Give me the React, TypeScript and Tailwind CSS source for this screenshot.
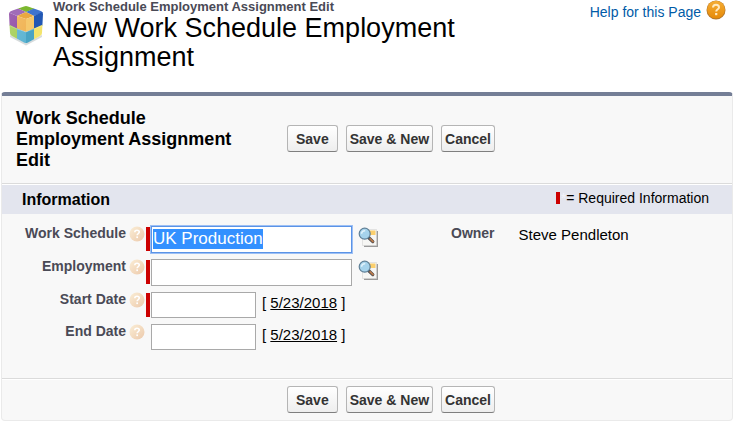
import { useEffect, useRef } from "react";
import type { ReactNode, RefObject } from "react";

function CubeIcon() {
  return (
    <svg viewBox="0 0 36 42" className="h-[42px] w-9 shrink-0" aria-hidden="true">
      <defs>
        <linearGradient id="cube-shade" x1="0" y1="0" x2="1" y2="1">
          <stop offset="0" stopColor="#fff" stopOpacity="0.15" />
          <stop offset="1" stopColor="#fff" stopOpacity="0" />
        </linearGradient>
        <clipPath id="cube-outline">
          <path d="M16 2.4Q18 1.6 20 2.4L33 7Q35 8 35 10L34 29Q34 31 32 32L20 38.5Q18 39.6 16 38.5L4 32Q2 31 2 29L1 10Q1 8 3 7Z" />
        </clipPath>
      </defs>
      <path d="M2 31 18 39 34 31 34 33 18 41.5 2 33Z" fill="#8d979c" opacity="0.35" />
      <g clipPath="url(#cube-outline)">
        <path d="M9 4 18 1 27 4.5 18 8Z" fill="#7cb82f" />
        <path d="M0 8 9 4 18 8 9 12Z" fill="#a06cb8" />
        <path d="M27 4 36 8 26 12 18 8Z" fill="#3f74cf" />
        <path d="M9 12 18 8 26 12 18 15Z" fill="#e9a840" />
        <path d="M0 8 9 12V25L0 21Z" fill="#8f4aa5" />
        <path d="M9 12 18 15V28L9 25Z" fill="#f0b352" />
        <path d="M18 15 26 12V25L18 28Z" fill="#f5c86c" />
        <path d="M26 12 36 7V21L26 25Z" fill="#2258b4" />
        <path d="M0 20 9 24.5V37L0 32Z" fill="#a5cf58" />
        <path d="M9 24.5 18 28V41L9 37Z" fill="#5db4d2" />
        <path d="M18 28 26 24.5V37L18 41Z" fill="#49a4c4" />
        <path d="M26 24.5 36 20V32L26 37Z" fill="#f3e46c" />
        <path d="M0 8 18 15V41L0 33Z" fill="url(#cube-shade)" />
        <path d="M0 21 9 25 18 28 26 25 36 21" fill="none" stroke="#fff" strokeOpacity="0.2" />
      </g>
    </svg>
  );
}

function HelpIcon() {
  return (
    <svg viewBox="0 0 20 20" className="size-5 shrink-0" aria-hidden="true">
      <defs>
        <linearGradient id="help-fill" x1="0" y1="0" x2="0" y2="1">
          <stop offset="0" stopColor="#f5ad35" />
          <stop offset="1" stopColor="#e68a08" />
        </linearGradient>
      </defs>
      <circle cx="10" cy="10" r="9.5" fill="#b0752c" />
      <circle cx="10" cy="9.6" r="8.9" fill="url(#help-fill)" />
      <path
        d="M7 7.6C7 5.6 8.3 4.8 10 4.8S13 5.8 13 7.4C13 9.3 10.2 9.3 10.2 11.6"
        fill="none"
        stroke="#ffe9c0"
        strokeWidth="2"
      />
      <rect x="9.1" y="13" width="2.2" height="2.2" fill="#ffe9c0" />
    </svg>
  );
}

function HintIcon() {
  return (
    <svg viewBox="0 0 16 16" className="size-4 shrink-0" aria-hidden="true">
      <defs>
        <linearGradient id="hint-fill" x1="0" y1="0" x2="1" y2="1">
          <stop offset="0" stopColor="#fbeed6" />
          <stop offset="1" stopColor="#ecc9ab" />
        </linearGradient>
      </defs>
      <circle cx="8" cy="8" r="7.5" fill="url(#hint-fill)" />
      <path
        d="M5.8 6.2C5.8 4.8 6.7 4.2 8 4.2S10.3 4.9 10.3 6.1C10.3 7.6 8.1 7.6 8.1 9.3"
        fill="none"
        stroke="#fff"
        strokeWidth="1.6"
      />
      <rect x="7.3" y="10.4" width="1.7" height="1.7" fill="#fff" />
    </svg>
  );
}

function LookupIcon() {
  return (
    <svg viewBox="0 0 21 21" className="size-[21px]" aria-hidden="true">
      <path d="M6 4H20V20H6Z" fill="#9a9a9a" />
      <path d="M4.5 2.5H18.5V18.5H4.5Z" fill="#f6f6f4" stroke="#d4d4d4" strokeWidth="0.6" />
      <path d="M9 3.5H17.5V8H9Z" fill="#fbcf6d" />
      <path d="M10.5 10.5 14.8 14.6" stroke="#4a4a4e" strokeWidth="3.2" strokeLinecap="round" />
      <path d="M12.2 11.8 15 14.6" stroke="#bd7c4c" strokeWidth="1.8" strokeLinecap="round" />
      <circle cx="6.7" cy="6.7" r="5.5" fill="#a6d3ec" stroke="#5f7f96" strokeWidth="1.2" />
      <path d="M3.6 6.8C3.7 4.7 5.1 3.6 7.2 3.7" fill="none" stroke="#e2f3fc" strokeWidth="1.5" />
    </svg>
  );
}

function ActionButton({ children }: { children: ReactNode }) {
  return (
    <button
      type="button"
      className="h-[27px] rounded-[3px] border border-[#b5b5b5] border-b-[#7f7f7f] bg-linear-to-b from-white to-[#eeeeee] px-[3px] text-[14px] leading-4 font-bold text-[#333] first:px-2"
    >
      {children}
    </button>
  );
}

function Actions() {
  return (
    <div className="flex gap-2">
      <ActionButton>Save</ActionButton>
      <ActionButton>Save &amp; New</ActionButton>
      <ActionButton>Cancel</ActionButton>
    </div>
  );
}

type FieldProps = {
  id: string;
  label: string;
  required?: boolean;
  lookup?: boolean;
  value?: string;
  inputRef?: RefObject<HTMLInputElement | null>;
};

function Field({ id, label, required, lookup, value, inputRef }: FieldProps) {
  return (
    <div className="flex items-start">
      <div className="flex w-[143px] shrink-0 items-start justify-end gap-[3px]">
        <label htmlFor={id} className="text-[14px] leading-[14px] font-bold text-[#4a4a56]">
          {label}
        </label>
        <HintIcon />
      </div>
      <span className={`mt-px ml-px h-6 w-1 shrink-0 ${required ? "bg-[#c00]" : ""}`} />
      <input
        id={id}
        ref={inputRef}
        type="text"
        defaultValue={value}
        required={required}
        className={`ml-px border border-[#a9a9a9] bg-white px-px pb-0.5 text-[17px] leading-5 text-black caret-transparent selection:bg-[#3390ff] selection:text-white focus:border-[#5b93e6] focus:outline-1 focus:outline-[#9dc0f5] ${
          lookup ? "h-[27px] w-[201px]" : "h-[26px] w-[105px]"
        }`}
      />
      {lookup ? (
        <button type="button" aria-label={`${label} lookup`} className="mt-px ml-1.5">
          <LookupIcon />
        </button>
      ) : (
        <span className="mt-0.5 ml-1.5 text-[15px] leading-[18px] whitespace-nowrap">
          [ <a href="#" className="underline">5/23/2018</a> ]
        </span>
      )}
    </div>
  );
}

export default function App() {
  const scheduleRef = useRef<HTMLInputElement>(null);

  useEffect(() => {
    scheduleRef.current?.focus();
    scheduleRef.current?.select();
  }, []);

  return (
    <main className="bg-white font-['Liberation_Sans',Arial,sans-serif] text-black">
      <header className="flex items-start pr-[7px] pl-2">
        <div className="pt-1">
          <CubeIcon />
        </div>
        <h1 className="ml-[9px] w-[420px] pb-5">
          <span className="block text-[13px] leading-[14px] font-bold text-[#4a4a56]">
            Work Schedule Employment Assignment Edit
          </span>
          <span className="block text-[27px] leading-[29px]">New Work Schedule Employment Assignment</span>
        </h1>
        <a href="#" className="ml-auto flex items-start gap-[5px] text-[14px] leading-6 text-[#015ba7]">
          <span>Help for this Page</span>
          <HelpIcon />
        </a>
      </header>

      <form className="ml-px rounded-[4px] border border-t-4 border-[#eaeaea] border-t-[#747e96] bg-[#f8f8f8]">
        <div className="flex items-start border-b border-[#dbdbdb] py-3 pl-3.5">
          <h2 className="w-[271px] shrink-0 pr-8 text-[18px] leading-[21px] font-bold">
            Work Schedule Employment Assignment Edit
          </h2>
          <div className="pt-[17px]">
            <Actions />
          </div>
        </div>

        <div className="flex items-center justify-between border-t border-white bg-[#e3e5ee] pr-[23px] pl-5">
          <h3 className="text-[16px] leading-[29px] font-bold">Information</h3>
          <div className="flex items-center pb-1 text-[14px] leading-5">
            <span className="mr-px h-3 w-1 bg-[#c00]" />
            <span className="text-[#f4f4fa]">*</span>
            <span>= Required Information</span>
          </div>
        </div>

        <div className="flex pt-3 pb-7">
          <div className="flex w-[449px] shrink-0 flex-col gap-1.5">
            <Field id="schedule" label="Work Schedule" required lookup value="UK Production" inputRef={scheduleRef} />
            <Field id="employment" label="Employment" required lookup />
            <Field id="start" label="Start Date" required />
            <Field id="end" label="End Date" />
          </div>
          <dl className="flex gap-6">
            <dt className="text-[14px] leading-[14px] font-bold text-[#4a4a56]">Owner</dt>
            <dd className="text-[15px] leading-[18px]">Steve Pendleton</dd>
          </dl>
        </div>

        <div className="border-t border-[#dbdbdb]">
          <div className="border-t border-white pt-1.5 pb-[7px] pl-[285px]">
            <Actions />
          </div>
        </div>
      </form>
    </main>
  );
}
